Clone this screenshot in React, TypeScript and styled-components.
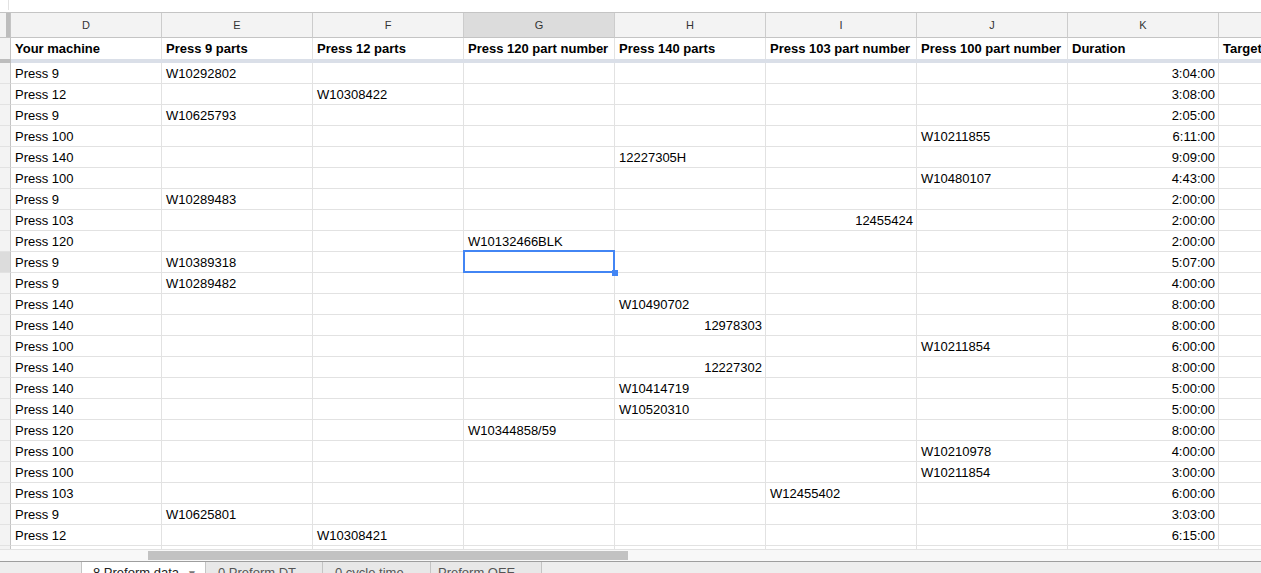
import React from 'react';
import styled, { createGlobalStyle } from 'styled-components';

const GlobalStyle = createGlobalStyle`
  html, body {
    margin: 0;
    padding: 0;
    height: 573px;
    overflow: hidden;
    background: #ffffff;
    font-family: "Liberation Sans", Arial, sans-serif;
  }
`;

const COLS = '11px repeat(9, 151px)';

const Sheet = styled.div`
  width: 1261px;
  height: 573px;
  display: flex;
  flex-direction: column;
  overflow: hidden;
`;

const TopStrip = styled.div`
  height: 12px;
  flex: none;
  border-bottom: 1px solid #c4c4c4;
  padding-left: 8px;
`;

const TopTick = styled.div`
  width: 0;
  height: 10px;
  border-left: 1px solid #e2e2e2;
`;

const Row = styled.div<{ $h: number }>`
  display: grid;
  grid-template-columns: ${COLS};
  height: ${(p) => p.$h}px;
  flex: none;
`;

const ColHeadCorner = styled.div`
  background: #f3f3f3;
  border-right: 1px solid #c4c4c4;
  border-bottom: 1px solid #c4c4c4;
  display: flex;
  justify-content: flex-end;
  padding-left: 6px;
  box-sizing: border-box;
`;

const FreezeBar = styled.div`
  width: 4px;
  background: #bdbdbd;
`;

const ColHead = styled.div<{ $active?: boolean }>`
  background: ${(p) => (p.$active ? '#dcdcdc' : '#f3f3f3')};
  border-right: 1px solid #cccccc;
  border-bottom: 1px solid #c4c4c4;
  display: flex;
  align-items: center;
  justify-content: center;
  font-size: 11px;
  color: #333;
`;

const RowHead = styled.div<{ $active?: boolean; $open?: boolean }>`
  background: ${(p) => (p.$active ? '#dcdcdc' : '#f3f3f3')};
  border-right: 1px solid #c4c4c4;
  border-bottom: ${(p) => (p.$open ? 'none' : '1px solid #e2e2e2')};
`;

const Cell = styled.div<{ $align?: 'left' | 'right'; $bold?: boolean; $open?: boolean }>`
  position: relative;
  border-right: 1px solid #e2e2e2;
  border-bottom: ${(p) => (p.$open ? 'none' : '1px solid #e2e2e2')};
  padding: ${(p) => (p.$bold ? '0' : '1px')} 3px 0 4px;
  font-size: 13px;
  font-weight: ${(p) => (p.$bold ? 700 : 400)};
  color: #000;
  display: flex;
  align-items: center;
  justify-content: ${(p) => (p.$align === 'right' ? 'flex-end' : 'flex-start')};
  white-space: nowrap;
  min-width: 0;
`;

const FreezeBand = styled.div`
  display: grid;
  grid-template-columns: 11px 1fr;
  height: 4px;
  flex: none;
`;

const FreezeBandHead = styled.div`
  background: #bdbdbd;
`;

const FreezeBandLine = styled.div`
  background: #dadfe8;
`;

const Selection = styled.div`
  position: absolute;
  z-index: 2;
  left: -1px;
  top: -2px;
  right: -1px;
  bottom: -1px;
  border: 2px solid #4285f4;
  pointer-events: none;
`;

const Handle = styled.div`
  position: absolute;
  right: -5px;
  bottom: -5px;
  width: 6px;
  height: 6px;
  background: #4285f4;
`;

const ScrollTrack = styled.div`
  height: 13px;
  flex: none;
  background: #f8f8f8;
  border-top: 1px solid #e2e2e2;
  border-bottom: 1px solid #9e9e9e;
  padding: 1px 0 0 148px;
  box-sizing: border-box;
`;

const ScrollThumb = styled.div`
  width: 480px;
  height: 9px;
  background: #c2c2c2;
`;

const TabBar = styled.div`
  flex: 1;
  display: flex;
  background: #eeeeee;
`;

const TabSpacer = styled.div`
  width: 81px;
  border-right: 1px solid #c4c4c4;
`;

const Tab = styled.div<{ $active?: boolean; $w: number; $pad: number }>`
  width: ${(p) => p.$w}px;
  box-sizing: border-box;
  padding: 3px 0 0 ${(p) => p.$pad}px;
  background: ${(p) => (p.$active ? '#ffffff' : '#e8e8e8')};
  border-right: 1px solid #c4c4c4;
  font-size: 13px;
  line-height: 15px;
  color: ${(p) => (p.$active ? '#222' : '#555')};
  white-space: nowrap;
  overflow: hidden;
`;

const TabArrow = styled.span`
  margin-left: 8px;
  font-size: 10px;
  color: #777;
`;

const LETTERS = ['D', 'E', 'F', 'G', 'H', 'I', 'J', 'K', 'L'];
const HEADERS = [
  'Your machine',
  'Press 9 parts',
  'Press 12 parts',
  'Press 120 part number',
  'Press 140 parts',
  'Press 103 part number',
  'Press 100 part number',
  'Duration',
  'Target',
];

type Entry = { machine: string; col: number; part: string; num?: boolean; dur: string };

// col index: 1=E, 2=F, 3=G, 4=H, 5=I, 6=J
const rows: Entry[] = [
  { machine: 'Press 9', col: 1, part: 'W10292802', dur: '3:04:00' },
  { machine: 'Press 12', col: 2, part: 'W10308422', dur: '3:08:00' },
  { machine: 'Press 9', col: 1, part: 'W10625793', dur: '2:05:00' },
  { machine: 'Press 100', col: 6, part: 'W10211855', dur: '6:11:00' },
  { machine: 'Press 140', col: 4, part: '12227305H', dur: '9:09:00' },
  { machine: 'Press 100', col: 6, part: 'W10480107', dur: '4:43:00' },
  { machine: 'Press 9', col: 1, part: 'W10289483', dur: '2:00:00' },
  { machine: 'Press 103', col: 5, part: '12455424', num: true, dur: '2:00:00' },
  { machine: 'Press 120', col: 3, part: 'W10132466BLK', dur: '2:00:00' },
  { machine: 'Press 9', col: 1, part: 'W10389318', dur: '5:07:00' },
  { machine: 'Press 9', col: 1, part: 'W10289482', dur: '4:00:00' },
  { machine: 'Press 140', col: 4, part: 'W10490702', dur: '8:00:00' },
  { machine: 'Press 140', col: 4, part: '12978303', num: true, dur: '8:00:00' },
  { machine: 'Press 100', col: 6, part: 'W10211854', dur: '6:00:00' },
  { machine: 'Press 140', col: 4, part: '12227302', num: true, dur: '8:00:00' },
  { machine: 'Press 140', col: 4, part: 'W10414719', dur: '5:00:00' },
  { machine: 'Press 140', col: 4, part: 'W10520310', dur: '5:00:00' },
  { machine: 'Press 120', col: 3, part: 'W10344858/59', dur: '8:00:00' },
  { machine: 'Press 100', col: 6, part: 'W10210978', dur: '4:00:00' },
  { machine: 'Press 100', col: 6, part: 'W10211854', dur: '3:00:00' },
  { machine: 'Press 103', col: 5, part: 'W12455402', dur: '6:00:00' },
  { machine: 'Press 9', col: 1, part: 'W10625801', dur: '3:03:00' },
  { machine: 'Press 12', col: 2, part: 'W10308421', dur: '6:15:00' },
];

const SELECTED_ROW = 9;
const SELECTED_COL = 3;

const App = () => {
  return (
    <>
      <GlobalStyle />
      <Sheet>
        <TopStrip>
          <TopTick />
        </TopStrip>

        <Row $h={25}>
          <ColHeadCorner>
            <FreezeBar />
          </ColHeadCorner>
          {LETTERS.map((l, i) => (
            <ColHead key={l} $active={i === SELECTED_COL}>
              {i === 8 ? '' : l}
            </ColHead>
          ))}
        </Row>

        <Row $h={21}>
          <RowHead $open />
          {HEADERS.map((h) => (
            <Cell key={h} $bold $open>
              {h}
            </Cell>
          ))}
        </Row>

        <FreezeBand>
          <FreezeBandHead />
          <FreezeBandLine />
        </FreezeBand>

        {rows.map((r, ri) => (
          <Row key={ri} $h={21}>
            <RowHead $active={ri === SELECTED_ROW} />
            {LETTERS.map((_, ci) => {
              let content = '';
              let align: 'left' | 'right' = 'left';
              if (ci === 0) content = r.machine;
              else if (ci === r.col) {
                content = r.part;
                if (r.num) align = 'right';
              } else if (ci === 7) {
                content = r.dur;
                align = 'right';
              }
              const selected = ri === SELECTED_ROW && ci === SELECTED_COL;
              return (
                <Cell key={ci} $align={align}>
                  {content}
                  {selected && (
                    <Selection>
                      <Handle />
                    </Selection>
                  )}
                </Cell>
              );
            })}
          </Row>
        ))}

        <Row $h={3}>
          <RowHead $open />
          {LETTERS.map((l) => (
            <Cell key={l} $open />
          ))}
        </Row>

        <ScrollTrack>
          <ScrollThumb />
        </ScrollTrack>

        <TabBar>
          <TabSpacer />
          <Tab $active $w={124} $pad={11}>
            8 Preform data
            <TabArrow>▼</TabArrow>
          </Tab>
          <Tab $w={117} $pad={12}>
            0 Preform DT
          </Tab>
          <Tab $w={108} $pad={12}>
            0 cycle time
          </Tab>
          <Tab $w={111} $pad={7}>
            Preform OEE
          </Tab>
        </TabBar>
      </Sheet>
    </>
  );
};

export default App;
